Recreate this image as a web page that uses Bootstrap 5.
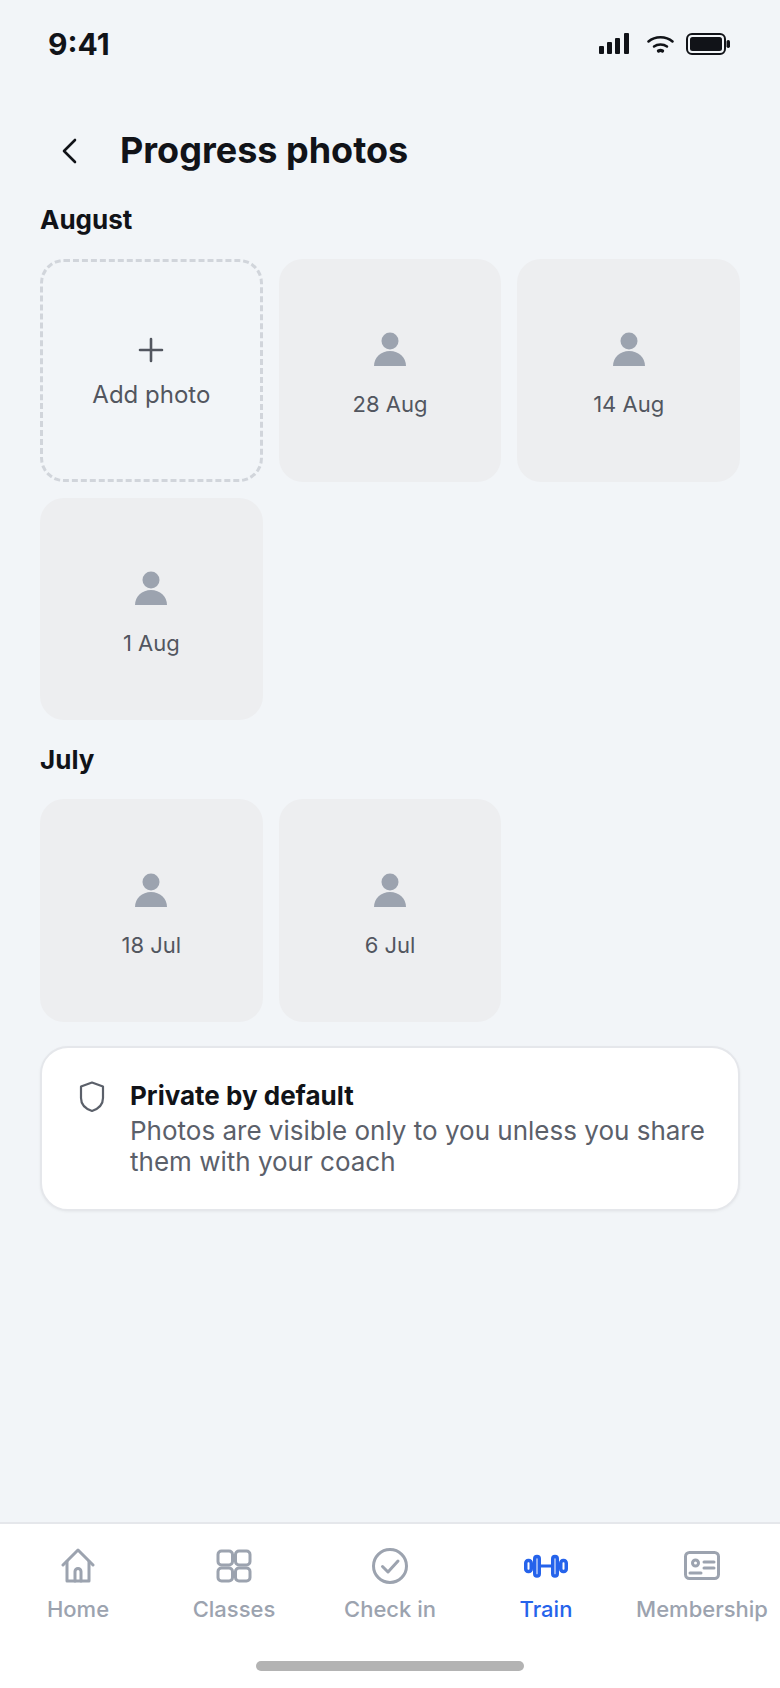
<!DOCTYPE html>
<html lang="en">
  <head>
    <meta charset="UTF-8" />
    <meta name="viewport" content="width=device-width, initial-scale=1.0" />
    <title>Progress photos</title>
    <link href="https://cdn.jsdelivr.net/npm/bootstrap@5.3.3/dist/css/bootstrap.min.css" rel="stylesheet" />
    <style>
      body {
        font-family: Inter, "Liberation Sans", sans-serif;
        background: #f2f5f8;
        color: #111318;
      }
      .app-shell { min-height: 1688px; }
      .status-row { height: 88px; padding: 0 50px 0 48px; }
      .status-time { font-size: 30px; font-weight: 700; line-height: 1; }
      .status-icons svg + svg { margin-left: 18px; }
      .status-icons svg:last-child { margin-left: 12px; }
      .title-row { height: 62px; margin-top: 32px; padding-left: 60px; gap: 40px; }
      .page-title { font-size: 36px; font-weight: 700; margin: 0; }
      .page-body { padding: 0 40px; }
      .month-label { font-size: 26px; font-weight: 700; line-height: 32px; margin: 0; }
      .month-august { margin-top: 22px; margin-bottom: 23px; }
      .month-july { margin-top: 24px; margin-bottom: 23px; }
      .photo-grid { display: grid; grid-template-columns: repeat(3, 1fr); gap: 16px; }
      .photo-tile {
        aspect-ratio: 1 / 1;
        background: #edeef0;
        border-radius: 24px;
        color: #52565f;
        font-size: 22px;
        line-height: 28px;
        padding-top: 10px;
      }
      .photo-tile.add-tile {
        background: transparent;
        border: 3px dashed #d1d5db;
        font-size: 24px;
        gap: 18px;
        padding-top: 5px;
      }
      .photo-tile .tile-date { margin-top: 24px; }
      .privacy-note {
        margin-top: 24px;
        background: #fff;
        border: 2px solid #e5e7eb;
        border-radius: 28px;
        padding: 33px 24px 32px 37px;
        gap: 25px;
        box-shadow: 0 1px 3px rgba(17, 19, 24, 0.05);
      }
      .privacy-title { font-size: 26px; font-weight: 700; line-height: 32px; margin-bottom: 3px; margin-top: -1px; }
      .privacy-text { font-size: 26px; line-height: 31px; color: #5b606a; }
      .tab-bar { background: #fff; border-top: 2px solid #e5e7eb; height: 166px; padding-top: 24px; }
      .tab-item { width: 156px; color: #9ca3af; font-size: 22px; font-weight: 500; line-height: 28px; gap: 11px; }
      .tab-item.is-active { color: #2563eb; }
      .tab-icon { width: 44px; height: 36px; }
      .home-bar { width: 268px; height: 10px; background: #b3b3b3; border-radius: 5px; position: absolute; left: 256px; top: 137px; }
    </style>
  </head>
  <body>
    <div class="app-shell d-flex flex-column">
      <div class="status-row d-flex justify-content-between align-items-center">
        <span class="status-time">9:41</span>
        <div class="status-icons d-flex align-items-center">
          <svg width="30" height="22" viewBox="0 0 30 22" fill="#111318"><rect x="0" y="13" width="5" height="8" rx="1"/><rect x="8" y="9" width="5" height="12" rx="1"/><rect x="16" y="5" width="5" height="16" rx="1"/><rect x="25" y="0" width="5" height="21" rx="1"/></svg>
          <svg width="27" height="18" viewBox="0 0 27 18" fill="none" stroke="#111318" stroke-width="2.500" stroke-linecap="round"><path d="M1.500 6.500C8 .8 19 .8 25.500 6.500"/><path d="M7 11.500c3.600-2.700 9.400-2.700 13 0"/><path d="M11.500 16c1.200-.7 2.800-.7 4 0" stroke-width="3.200"/></svg>
          <svg width="44" height="22" viewBox="0 0 44 22"><rect x="1" y="1" width="38" height="20" rx="5" fill="none" stroke="#111318" stroke-width="2"/><rect x="4" y="4" width="32" height="14" rx="2.500" fill="#111318"/><rect x="40.500" y="7" width="3.500" height="8" rx="1.700" fill="#111318"/></svg>
        </div>
      </div>

      <div class="title-row d-flex align-items-center">
        <svg width="20" height="26" viewBox="0 0 20 26" fill="none" stroke="#111318" stroke-width="2.600" stroke-linecap="round" stroke-linejoin="round"><path d="M15 2 4 13l11 11"/></svg>
        <h1 class="page-title">Progress photos</h1>
      </div>

      <main class="page-body flex-grow-1">
        <h2 class="month-label month-august">August</h2>
        <div class="photo-grid">
          <div class="photo-tile add-tile d-flex flex-column align-items-center justify-content-center">
            <svg width="26" height="26" viewBox="0 0 26 26" fill="none" stroke="#52565f" stroke-width="2.600" stroke-linecap="round"><path d="M13 2v22M2 13h22"/></svg>
            <span>Add photo</span>
          </div>
          <div class="photo-tile d-flex flex-column align-items-center justify-content-center">
            <svg width="34" height="34" viewBox="0 0 34 34" fill="#9ca3af"><circle cx="17" cy="9" r="8.500"/><path d="M1 34c0-8.500 7-15 16-15s16 6.500 16 15z"/></svg>
            <span class="tile-date">28 Aug</span>
          </div>
          <div class="photo-tile d-flex flex-column align-items-center justify-content-center">
            <svg width="34" height="34" viewBox="0 0 34 34" fill="#9ca3af"><circle cx="17" cy="9" r="8.500"/><path d="M1 34c0-8.500 7-15 16-15s16 6.500 16 15z"/></svg>
            <span class="tile-date">14 Aug</span>
          </div>
          <div class="photo-tile d-flex flex-column align-items-center justify-content-center">
            <svg width="34" height="34" viewBox="0 0 34 34" fill="#9ca3af"><circle cx="17" cy="9" r="8.500"/><path d="M1 34c0-8.500 7-15 16-15s16 6.500 16 15z"/></svg>
            <span class="tile-date">1 Aug</span>
          </div>
        </div>

        <h2 class="month-label month-july">July</h2>
        <div class="photo-grid">
          <div class="photo-tile d-flex flex-column align-items-center justify-content-center">
            <svg width="34" height="34" viewBox="0 0 34 34" fill="#9ca3af"><circle cx="17" cy="9" r="8.500"/><path d="M1 34c0-8.500 7-15 16-15s16 6.500 16 15z"/></svg>
            <span class="tile-date">18 Jul</span>
          </div>
          <div class="photo-tile d-flex flex-column align-items-center justify-content-center">
            <svg width="34" height="34" viewBox="0 0 34 34" fill="#9ca3af"><circle cx="17" cy="9" r="8.500"/><path d="M1 34c0-8.500 7-15 16-15s16 6.500 16 15z"/></svg>
            <span class="tile-date">6 Jul</span>
          </div>
        </div>

        <div class="privacy-note d-flex align-items-start">
          <svg class="flex-shrink-0" width="26" height="32" viewBox="0 0 26 32" fill="none" stroke="#5b606a" stroke-width="2.200" stroke-linejoin="round"><path d="M13 1.500 24 5.500V17c0 6.500-4.500 10.800-11 13C6.500 27.800 2 23.500 2 17V5.500z"/></svg>
          <div>
            <div class="privacy-title">Private by default</div>
            <div class="privacy-text">Photos are visible only to you unless you share them with your coach</div>
          </div>
        </div>
      </main>

      <nav class="tab-bar d-flex position-relative">
        <div class="tab-item d-flex flex-column align-items-center">
          <svg class="tab-icon" viewBox="0 0 44 36" fill="none" stroke="currentColor" stroke-width="3" stroke-linejoin="round" stroke-linecap="round"><path d="M7 17 22 2l15 15"/><path d="M11 13.500V33h22V13.500"/><path d="M19 33V23.500a3 3 0 0 1 6 0V33"/></svg>
          <span>Home</span>
        </div>
        <div class="tab-item d-flex flex-column align-items-center">
          <svg class="tab-icon" viewBox="0 0 44 36" fill="none" stroke="currentColor" stroke-width="3"><rect x="6" y="3" width="14.500" height="14" rx="3.500"/><rect x="23.500" y="3" width="14.500" height="14" rx="3.500"/><rect x="6" y="20" width="14.500" height="13" rx="3.500"/><rect x="23.500" y="20" width="14.500" height="13" rx="3.500"/></svg>
          <span>Classes</span>
        </div>
        <div class="tab-item d-flex flex-column align-items-center">
          <svg class="tab-icon" viewBox="0 0 44 36" fill="none" stroke="currentColor" stroke-width="3" stroke-linecap="round" stroke-linejoin="round"><circle cx="22" cy="18" r="16.500"/><path d="m14.500 18.500 5.500 5.500 10-11"/></svg>
          <span>Check in</span>
        </div>
        <div class="tab-item is-active d-flex flex-column align-items-center">
          <svg class="tab-icon" viewBox="0 0 44 36" fill="none" stroke="currentColor" stroke-width="3.500" stroke-linecap="round"><rect x="1.750" y="12.500" width="5.500" height="11" rx="2.500"/><rect x="10.750" y="8.500" width="4.500" height="19.500" rx="2.250"/><rect x="28.750" y="8.500" width="4.500" height="19.500" rx="2.250"/><rect x="36.750" y="12.500" width="5.500" height="11" rx="2.500"/><path d="M17 18h10" stroke-width="3"/></svg>
          <span>Train</span>
        </div>
        <div class="tab-item d-flex flex-column align-items-center">
          <svg class="tab-icon" viewBox="0 0 44 36" fill="none" stroke="currentColor" stroke-width="3" stroke-linecap="round"><rect x="5.500" y="4.500" width="33" height="26" rx="4"/><circle cx="15.500" cy="15" r="3"/><path d="M10 25h11M24 14h10M24 20h10"/></svg>
          <span>Membership</span>
        </div>
        <div class="home-bar"></div>
      </nav>
    </div>
    <script src="https://cdn.jsdelivr.net/npm/bootstrap@5.3.3/dist/js/bootstrap.bundle.min.js"></script>
  </body>
</html>
